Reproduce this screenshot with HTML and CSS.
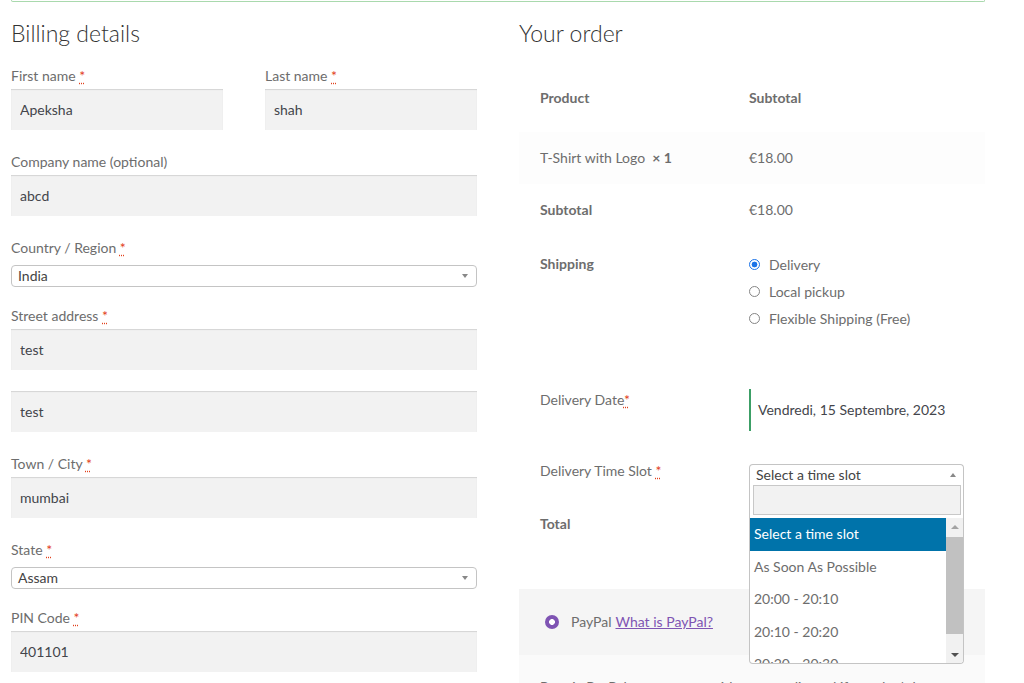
FILE: index.html
```html
<!DOCTYPE html>
<html lang="en">
<head>
<meta charset="utf-8">
<title>Checkout</title>
<link rel="stylesheet" href="styles.css">
</head>
<body>
<div class="notice"></div>
<div class="checkout">
  <section class="billing">
    <h3>Billing details</h3>
    <div class="fields">
      <div class="row2">
        <div class="field">
          <label>First name <abbr class="req">*</abbr></label>
          <input class="input-text" type="text" value="Apeksha">
        </div>
        <div class="field">
          <label>Last name <abbr class="req">*</abbr></label>
          <input class="input-text" type="text" value="shah">
        </div>
      </div>
      <div class="field">
        <label>Company name (optional)</label>
        <input class="input-text" type="text" value="abcd">
      </div>
      <div class="field field-select">
        <label>Country / Region <abbr class="req">*</abbr></label>
        <div class="select"><span>India</span><span class="arrow-down"></span></div>
      </div>
      <div class="field">
        <label>Street address <abbr class="req">*</abbr></label>
        <input class="input-text" type="text" value="test">
        <input class="input-text second" type="text" value="test">
      </div>
      <div class="field">
        <label>Town / City <abbr class="req">*</abbr></label>
        <input class="input-text" type="text" value="mumbai">
      </div>
      <div class="field field-select">
        <label>State <abbr class="req">*</abbr></label>
        <div class="select"><span>Assam</span><span class="arrow-down"></span></div>
      </div>
      <div class="field">
        <label>PIN Code <abbr class="req">*</abbr></label>
        <input class="input-text" type="text" value="401101">
      </div>
    </div>
  </section>

  <section class="order">
    <h3>Your order</h3>
    <table class="order-table">
      <thead>
        <tr><th class="c1">Product</th><th class="c2">Subtotal</th></tr>
      </thead>
      <tbody>
        <tr class="item"><td class="c1">T-Shirt with Logo&nbsp; <strong>× 1</strong></td><td class="c2">€18.00</td></tr>
      </tbody>
      <tfoot>
        <tr><th class="c1">Subtotal</th><td class="c2">€18.00</td></tr>
        <tr class="shipping">
          <th class="c1">Shipping</th>
          <td class="c2">
            <ul class="methods-ship">
              <li><span class="radio checked"></span>Delivery</li>
              <li><span class="radio"></span>Local pickup</li>
              <li><span class="radio"></span>Flexible Shipping (Free)</li>
            </ul>
          </td>
        </tr>
        <tr class="ddate">
          <td class="c1 plain">Delivery Date<abbr class="req">*</abbr></td>
          <td class="c2"><div class="datebox">Vendredi, 15 Septembre, 2023</div></td>
        </tr>
        <tr class="dslot">
          <td class="c1 plain">Delivery Time Slot <abbr class="req">*</abbr></td>
          <td class="c2">
            <div class="slot-wrap">
              <div class="slot-select"><span>Select a time slot</span><span class="arrow-up"></span></div>
              <div class="dropdown">
                <div class="search"><div class="search-field"></div></div>
                <div class="results">
                  <ul class="options">
                    <li class="hl">Select a time slot</li>
                    <li>As Soon As Possible</li>
                    <li>20:00 - 20:10</li>
                    <li>20:10 - 20:20</li>
                    <li>20:20 - 20:30</li>
                  </ul>
                  <div class="scrollbar">
                    <div class="sb-btn"><span class="sb-up"></span></div>
                    <div class="sb-track"><div class="sb-thumb"></div></div>
                    <div class="sb-btn"><span class="sb-down"></span></div>
                  </div>
                </div>
              </div>
            </div>
          </td>
        </tr>
        <tr class="total"><th class="c1">Total</th><td class="c2"></td></tr>
      </tfoot>
    </table>

    <div class="payment">
      <div class="method"><span class="pp-radio"></span>PayPal <a href="#">What is PayPal?</a></div>
      <div class="payment-box">Pay via PayPal; you can pay with your credit card if you don't have a PayPal account.</div>
    </div>
  </section>
</div>
</body>
</html>
```
FILE: styles.css
```css
html, body {
  margin: 0;
  padding: 0;
}
body {
  font-family: Lato, "Liberation Sans", sans-serif;
  font-size: 14px;
  line-height: 24px;
  color: #6d6d6d;
  background: #fff;
  overflow: hidden;
}
.notice {
  width: 972px;
  margin-left: 11px;
  height: 1px;
  border: 1px solid #a9d9ad;
  border-top: 0;
  border-radius: 0 0 3px 3px;
}
.checkout {
  display: grid;
  grid-template-columns: 466px 466px;
  column-gap: 42px;
  margin-left: 11px;
}
h3 {
  margin: 16px 0 0;
  font-size: 23px;
  font-weight: 300;
  line-height: 30px;
  color: #333;
}
.fields {
  margin-top: 18px;
}
.row2 {
  display: grid;
  grid-template-columns: 212px 212px;
  justify-content: space-between;
}
.field {
  margin-bottom: 22px;
}
.field label {
  display: block;
  line-height: 20px;
  margin-bottom: 3px;
  color: #6d6d6d;
}
.req {
  color: #e2401c;
  text-decoration: underline dotted #e2401c;
  text-underline-offset: 2px;
}
.input-text {
  display: block;
  width: 100%;
  height: 41px;
  box-sizing: border-box;
  margin: 0;
  border: 0;
  outline: 0;
  padding: 0 9px;
  background: #f2f2f2;
  box-shadow: inset 0 1px 1px rgba(0, 0, 0, 0.125);
  font: inherit;
  font-size: 14px;
  color: #43454b;
}
.input-text.second {
  margin-top: 21px;
}
.field-select {
  margin-bottom: 19px;
}
.field-select label {
  margin-bottom: 7px;
}
.select {
  height: 22px;
  box-sizing: border-box;
  border: 1px solid #c4c4c4;
  border-radius: 4px;
  padding: 0 6px;
  display: flex;
  align-items: center;
  justify-content: space-between;
  color: #444;
  line-height: 20px;
}
.arrow-down {
  width: 0;
  height: 0;
  border-left: 3px solid transparent;
  border-right: 3px solid transparent;
  border-top: 4px solid #888;
  margin-right: 2px;
}

/* order table */
.order-table {
  width: 466px;
  border-collapse: collapse;
  margin-top: 24px;
}
.order-table th,
.order-table td {
  padding: 14px 0;
  text-align: left;
  vertical-align: top;
  line-height: 24px;
  font-weight: 400;
}
.order-table th {
  font-weight: 700;
}
.order-table .c1 {
  width: 209px;
  padding-left: 21px;
}
.order-table .c2 {
  padding-left: 0;
}
.order-table thead th {
  padding-bottom: 22px;
}
.order-table .item td {
  background: #fdfdfd;
}
.order-table strong {
  font-weight: 700;
}
.shipping th {
  padding-top: 16px;
}
.shipping td {
  padding-top: 15px;
  padding-bottom: 42px;
}
.methods-ship {
  list-style: none;
  margin: 0;
  padding: 0;
}
.methods-ship li {
  display: flex;
  align-items: center;
  line-height: 27px;
}
.radio {
  width: 11px;
  height: 11px;
  box-sizing: border-box;
  border: 1px solid #858585;
  border-radius: 50%;
  margin-right: 9px;
  background: #fff;
}
.radio.checked {
  border-color: #1a73e8;
  background: radial-gradient(circle, #1a73e8 0 2.6px, #fff 3.2px);
}
.ddate td.c2 {
  padding-top: 15px;
  padding-bottom: 15px;
}
.datebox {
  height: 42px;
  box-sizing: border-box;
  border-left: 2px solid #3c9f66;
  padding-left: 7px;
  line-height: 42px;
  color: #43454b;
}
.dslot td.c1 {
  padding-top: 13px;
}
.dslot td.c2 {
  padding-top: 18px;
  padding-bottom: 13px;
}
.slot-wrap {
  position: relative;
  width: 215px;
}
.slot-select {
  height: 21px;
  box-sizing: border-box;
  border: 1px solid #c4c4c4;
  border-bottom: 0;
  border-radius: 4px 4px 0 0;
  padding: 0 6px;
  display: flex;
  align-items: center;
  justify-content: space-between;
  color: #444;
  line-height: 20px;
}
.arrow-up {
  width: 0;
  height: 0;
  border-left: 3px solid transparent;
  border-right: 3px solid transparent;
  border-bottom: 4px solid #888;
  margin-right: 1px;
}
.dropdown {
  position: absolute;
  top: 21px;
  left: 0;
  width: 215px;
  box-sizing: border-box;
  border: 1px solid #c4c4c4;
  border-top: 0;
  border-radius: 0 0 4px 4px;
  background: #fff;
  z-index: 5;
  overflow: hidden;
}
.search {
  padding: 0 2px 3px 3px;
}
.search-field {
  height: 30px;
  box-sizing: border-box;
  border: 1px solid #c8c8c8;
  background: #f2f2f2;
}
.results {
  display: flex;
  height: 145px;
}
.options {
  list-style: none;
  margin: 0;
  padding: 0;
  flex: 1;
  overflow: hidden;
}
.options li {
  height: 32.5px;
  line-height: 32.5px;
  padding: 0 4px;
  color: #6d6d6d;
  white-space: nowrap;
}
.options li.hl {
  background: #0073aa;
  color: #fff;
}
.scrollbar {
  width: 17px;
  display: flex;
  flex-direction: column;
  background: #f1f1f1;
}
.sb-btn {
  height: 17px;
  display: flex;
  align-items: center;
  justify-content: center;
}
.sb-up {
  width: 0;
  height: 0;
  border-left: 4px solid transparent;
  border-right: 4px solid transparent;
  border-bottom: 4px solid #a3a3a3;
}
.sb-down {
  width: 0;
  height: 0;
  border-left: 4px solid transparent;
  border-right: 4px solid transparent;
  border-top: 4px solid #505050;
}
.sb-track {
  flex: 1;
  padding-top: 2px;
}
.sb-thumb {
  height: 97px;
  background: #c1c1c1;
}

/* payment */
.payment {
  margin-top: 39px;
}
.method {
  background: #f5f5f5;
  height: 66px;
  box-sizing: border-box;
  padding: 21px 0 21px 26px;
  display: flex;
  align-items: center;
  line-height: 24px;
}
.pp-radio {
  width: 14px;
  height: 14px;
  border-radius: 50%;
  background: radial-gradient(circle, #fff 0 2.6px, #7f54b3 3.2px);
  margin-right: 12px;
}
.method a {
  color: #7f54b3;
  text-decoration: underline;
  margin-left: 4px;
}
.payment-box {
  background: #fafafa;
  padding: 20px 21px;
  line-height: 24px;
}
```
